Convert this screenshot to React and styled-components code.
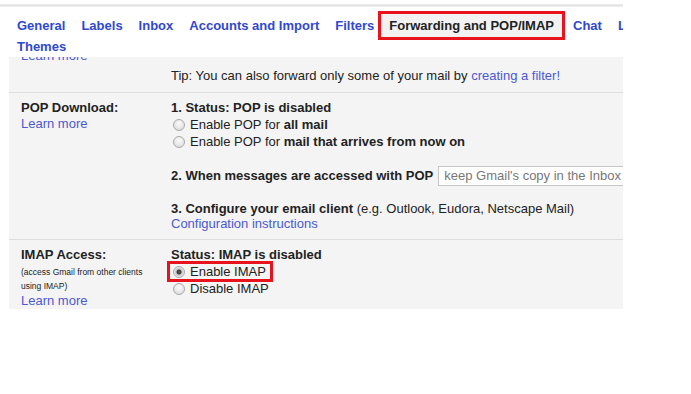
import React from 'react'
import styled, {createGlobalStyle} from 'styled-components'

const GlobalStyle = createGlobalStyle`
  body{
    margin: 0;
    background: #fff;
    font-family: "Liberation Sans", Arial, sans-serif;
    font-size: 13px;
    color: #222;
  }
`

const tabs = ['General', 'Labels', 'Inbox', 'Accounts and Import', 'Filters', 'Forwarding and POP/IMAP', 'Chat', 'Labs']

const App = () => {
  return (
    <>
      <GlobalStyle/>
      <Page>
        <Shadow/>
        <TabRow>
          {tabs.map((t)=>(
            <Tab key={t} $active={t === 'Forwarding and POP/IMAP'}>{t}</Tab>
          ))}
        </TabRow>
        <TabRow $second>
          <Tab>Themes</Tab>
        </TabRow>
        <Panel>
          <Row $first>
            <Label>
              <Link>Learn more</Link>
            </Label>
            <Content>
              <Tip>Tip: You can also forward only some of your mail by <Link>creating a filter!</Link></Tip>
            </Content>
          </Row>
          <Row>
            <Label>
              <Title>POP Download:</Title>
              <Link>Learn more</Link>
            </Label>
            <Content>
              <Title>1. Status: POP is disabled</Title>
              <RadioRow><Radio/>Enable POP for&nbsp;<b>all mail</b></RadioRow>
              <RadioRow><Radio/>Enable POP for&nbsp;<b>mail that arrives from now on</b></RadioRow>
              <Step>
                <b>2. When messages are accessed with POP</b>
                <SelectBox>keep Gmail's copy in the Inbox</SelectBox>
              </Step>
              <Block>
                <div><b>3. Configure your email client</b> (e.g. Outlook, Eudora, Netscape Mail)</div>
                <Link>Configuration instructions</Link>
              </Block>
            </Content>
          </Row>
          <Row $last>
            <Label>
              <Title>IMAP Access:</Title>
              <Small>(access Gmail from other clients<br/>using IMAP)</Small>
              <Link>Learn more</Link>
            </Label>
            <Content>
              <Title>Status: IMAP is disabled</Title>
              <RadioRow $marked><Radio $checked/>Enable IMAP</RadioRow>
              <RadioRow><Radio/>Disable IMAP</RadioRow>
            </Content>
          </Row>
        </Panel>
      </Page>
    </>
  )
}

const Page = styled.div`
  width: 623px;
  padding-top: 4px;
`
const Shadow = styled.div`
  height: 3px;
  background: linear-gradient(#f0f0f0, #e2e2e2 50%, #f4f4f4);
`
const TabRow = styled.div`
  display: flex;
  white-space: nowrap;
  overflow: hidden;
  padding-left: 9px;
  margin-top: ${p => p.$second ? '-2px' : '4px'};
  height: ${p => p.$second ? '16px' : '29px'};
  align-items: center;
`
const Tab = styled.div`
  flex-shrink: 0;
  box-sizing: border-box;
  padding: 0 8px;
  height: 100%;
  display: flex;
  align-items: center;
  font-weight: bold;
  font-size: 13px;
  color: ${p => p.$active ? '#222' : '#3048cf'};
  background: ${p => p.$active ? '#f2f2f2' : 'transparent'};
  border: ${p => p.$active ? '3px solid #e8131d' : 'none'};
  margin-left: ${p => p.$active ? '-4px' : '0'};
`
const Panel = styled.div`
  margin: 3px 0 0 9px;
  width: 614px;
  background: #f4f4f4;
  overflow: hidden;
`
const Row = styled.div`
  display: grid;
  grid-template-columns: 162px 1fr;
  margin-top: ${p => p.$first ? '-9px' : '0'};
  padding: ${p => p.$first ? '0' : '7px'} 0 ${p => p.$last ? '0' : '8px'};
  border-top: ${p => p.$first ? 'none' : '1px solid #dedede'};
`
const Label = styled.div`
  padding-left: 12px;
  display: flex;
  flex-direction: column;
  align-items: flex-start;
  line-height: 16px;
`
const Content = styled.div`
  display: flex;
  flex-direction: column;
  align-items: flex-start;
  line-height: 16px;
`
const Title = styled.div`
  font-weight: bold;
  line-height: 16px;
`
const Link = styled.span`
  color: #4b58d4;
  cursor: pointer;
`
const Tip = styled.div`
  margin-top: 20px;
`
const Small = styled.div`
  font-size: 8.5px;
  line-height: 14px;
  margin-top: 2px;
`
const RadioRow = styled.div`
  position: relative;
  display: flex;
  align-items: center;
  height: 17.5px;
  padding-left: 2px;
  &::after{
    content: '';
    display: ${p => p.$marked ? 'block' : 'none'};
    position: absolute;
    left: -4px;
    top: -2px;
    right: -7px;
    bottom: -1.5px;
    border: 3px solid #e8131d;
  }
`
const Radio = styled.span`
  width: 12px;
  height: 12px;
  box-sizing: border-box;
  border-radius: 50%;
  border: 1px solid #a9a9a9;
  background: ${p => p.$checked
    ? 'radial-gradient(circle, #4a4a4a 0 2.2px, #bdbdbd 2.8px, #ececec 5px)'
    : 'radial-gradient(circle at 50% 35%, #fbfbfb, #d6d6d6)'};
  margin-right: 5px;
  flex-shrink: 0;
`
const Step = styled.div`
  display: flex;
  align-items: center;
  margin-top: 15px;
  height: 20px;
  white-space: nowrap;
`
const SelectBox = styled.div`
  margin-left: 5px;
  height: 20px;
  width: 220px;
  box-sizing: border-box;
  border: 1px solid #c6c6c6;
  background: #fff;
  color: #777;
  padding-left: 5px;
  line-height: 18px;
  flex-shrink: 0;
`
const Block = styled.div`
  margin-top: 15px;
  line-height: 15px;
  div{
    line-height: 15px;
  }
`

export default App
